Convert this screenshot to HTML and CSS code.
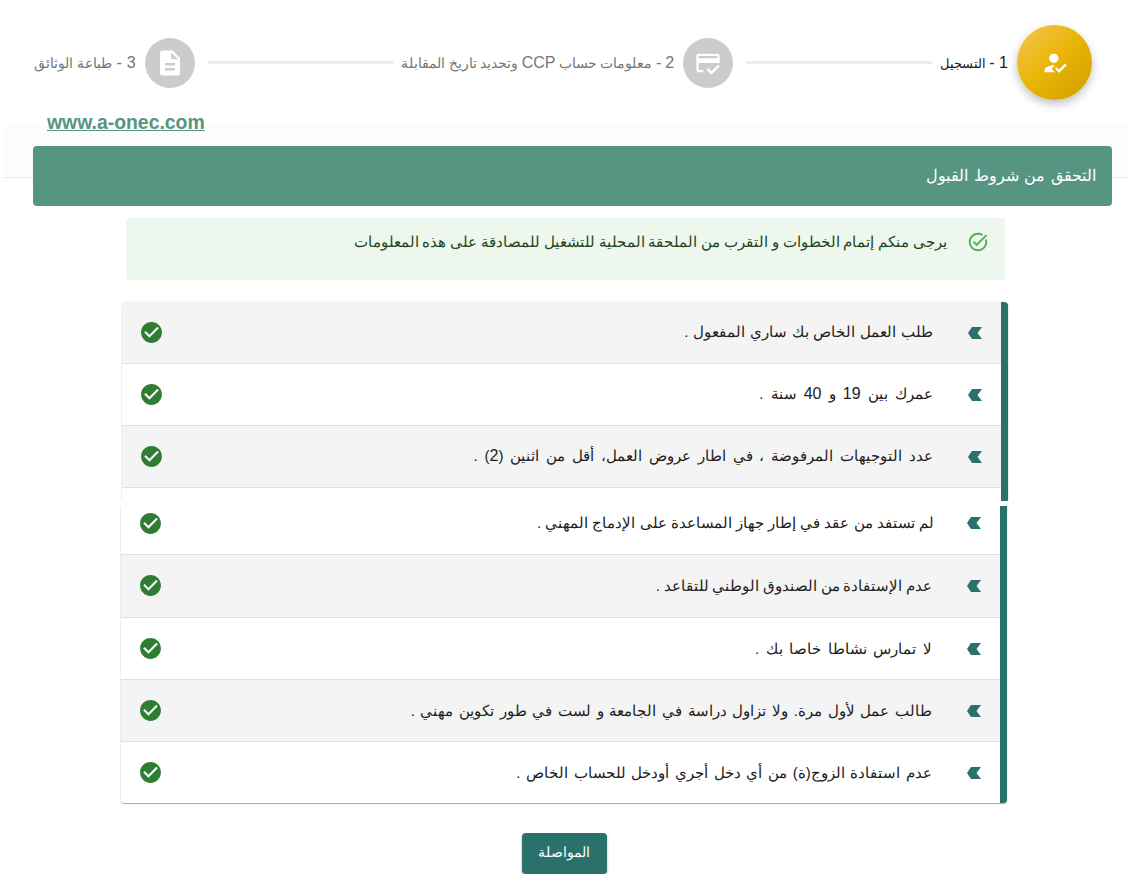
FILE: index.html
```html
<!DOCTYPE html>
<html lang="ar">
<head>
<meta charset="utf-8">
<title>التحقق من شروط القبول</title>
<link rel="stylesheet" href="styles.css">
</head>
<body>
<nav class="stepper" dir="rtl">
  <div class="step step-active">
    <span class="bubble bubble-active"><svg class="ico-28" viewBox="0 0 24 24"><path d="M9 17l3-2.94c-.39-.04-.68-.06-1-.06-2.67 0-8 1.34-8 4v2h9l-3-3zm2-5c2.21 0 4-1.79 4-4s-1.79-4-4-4-4 1.79-4 4 1.79 4 4 4m4.47 8.5L12 17l1.4-1.41 2.07 2.08 5.13-5.17 1.4 1.41z"/></svg></span>
    <span class="step-label"><span class="lat">1 -</span> التسجيل</span>
  </div>
  <span class="line"></span>
  <div class="step step-mid">
    <span class="bubble"><svg class="ico-28" viewBox="0 0 24 24"><path d="M20 4H4c-1.11 0-2 .89-2 2v12c0 1.11.89 2 2 2h4v-2H4v-6h18V6c0-1.11-.89-2-2-2zm0 4H4V6h16v2zm-5.07 11.17-2.83-2.83-1.41 1.41L14.93 22 22 14.93l-1.41-1.41-5.66 5.65z"/></svg></span>
    <span class="step-label"><span class="lat">2 -</span> معلومات حساب <span class="lat">CCP</span> وتحديد تاريخ المقابلة</span>
  </div>
  <span class="line"></span>
  <div class="step step-last">
    <span class="bubble"><svg class="ico-30" viewBox="0 0 24 24"><path d="M14 2H6c-1.1 0-1.99.9-1.99 2L4 20c0 1.1.89 2 1.99 2H18c1.1 0 2-.9 2-2V8l-6-6zm2 16H8v-2h8v2zm0-4H8v-2h8v2zm-3-5V3.5L18.5 9H13z"/></svg></span>
    <span class="step-label"><span class="lat">3 -</span> طباعة الوثائق</span>
  </div>
</nav>

<div class="band-wrap">
  <div class="band"></div>
  <a class="site-link" href="#">www.a-onec.com</a>
  <header class="title-bar" dir="rtl">التحقق من شروط القبول</header>
</div>

<div class="alert" dir="rtl">
  <svg class="alert-ico" viewBox="0 0 24 24"><path d="M22 5.18 10.59 16.6l-4.24-4.25 1.41-1.41 2.83 2.83 10-10L22 5.18zm-2.21 5.04c.13.57.21 1.17.21 1.78 0 4.42-3.58 8-8 8s-8-3.58-8-8 3.58-8 8-8c1.58 0 3.04.46 4.28 1.22l1.44-1.44C16.1 2.67 14.13 2 12 2 6.48 2 2 6.48 2 12s4.48 10 10 10 10-4.48 10-10c0-1.19-.22-2.33-.6-3.39l-1.61 1.61z"/></svg>
  <p class="alert-text">يرجى منكم إتمام الخطوات و التقرب من الملحقة المحلية للتشغيل للمصادقة على هذه المعلومات</p>
</div>

<section class="card card-one" dir="rtl">
  <div class="row row-grey">
    <svg class="chev" viewBox="0 0 14 12"><polygon points="0,6 4,0 14,0 9.5,6 14,12 4,12"/></svg>
    <span class="row-text ws-1">طلب العمل الخاص بك ساري المفعول .</span>
    <svg class="ok" viewBox="0 0 24 24"><path d="M12 2C6.48 2 2 6.48 2 12s4.48 10 10 10 10-4.48 10-10S17.52 2 12 2zm-2 15l-5-5 1.41-1.41L10 14.17l7.59-7.59L19 8l-9 9z"/></svg>
  </div>
  <div class="row">
    <svg class="chev" viewBox="0 0 14 12"><polygon points="0,6 4,0 14,0 9.5,6 14,12 4,12"/></svg>
    <span class="row-text ws-4">عمرك بين <span class="lat">19</span> و <span class="lat">40</span> سنة .</span>
    <svg class="ok" viewBox="0 0 24 24"><path d="M12 2C6.48 2 2 6.48 2 12s4.48 10 10 10 10-4.48 10-10S17.52 2 12 2zm-2 15l-5-5 1.41-1.41L10 14.17l7.59-7.59L19 8l-9 9z"/></svg>
  </div>
  <div class="row row-grey">
    <svg class="chev" viewBox="0 0 14 12"><polygon points="0,6 4,0 14,0 9.5,6 14,12 4,12"/></svg>
    <span class="row-text ws-3">عدد التوجيهات المرفوضة ، في اطار عروض العمل، أقل من اثنين (<span class="lat">2</span>) .</span>
    <svg class="ok" viewBox="0 0 24 24"><path d="M12 2C6.48 2 2 6.48 2 12s4.48 10 10 10 10-4.48 10-10S17.52 2 12 2zm-2 15l-5-5 1.41-1.41L10 14.17l7.59-7.59L19 8l-9 9z"/></svg>
  </div>
</section>

<section class="card card-two" dir="rtl">
  <div class="row row-first">
    <svg class="chev" viewBox="0 0 14 12"><polygon points="0,6 4,0 14,0 9.5,6 14,12 4,12"/></svg>
    <span class="row-text">لم تستفد من عقد في إطار جهاز المساعدة على الإدماج المهني .</span>
    <svg class="ok" viewBox="0 0 24 24"><path d="M12 2C6.48 2 2 6.48 2 12s4.48 10 10 10 10-4.48 10-10S17.52 2 12 2zm-2 15l-5-5 1.41-1.41L10 14.17l7.59-7.59L19 8l-9 9z"/></svg>
  </div>
  <div class="row row-grey">
    <svg class="chev" viewBox="0 0 14 12"><polygon points="0,6 4,0 14,0 9.5,6 14,12 4,12"/></svg>
    <span class="row-text ws-neg">عدم الإستفادة من الصندوق الوطني للتقاعد .</span>
    <svg class="ok" viewBox="0 0 24 24"><path d="M12 2C6.48 2 2 6.48 2 12s4.48 10 10 10 10-4.48 10-10S17.52 2 12 2zm-2 15l-5-5 1.41-1.41L10 14.17l7.59-7.59L19 8l-9 9z"/></svg>
  </div>
  <div class="row">
    <svg class="chev" viewBox="0 0 14 12"><polygon points="0,6 4,0 14,0 9.5,6 14,12 4,12"/></svg>
    <span class="row-text ws-2">لا تمارس نشاطا خاصا بك .</span>
    <svg class="ok" viewBox="0 0 24 24"><path d="M12 2C6.48 2 2 6.48 2 12s4.48 10 10 10 10-4.48 10-10S17.52 2 12 2zm-2 15l-5-5 1.41-1.41L10 14.17l7.59-7.59L19 8l-9 9z"/></svg>
  </div>
  <div class="row row-grey">
    <svg class="chev" viewBox="0 0 14 12"><polygon points="0,6 4,0 14,0 9.5,6 14,12 4,12"/></svg>
    <span class="row-text ws-15">طالب عمل لأول مرة. ولا تزاول دراسة في الجامعة و لست في طور تكوين مهني .</span>
    <svg class="ok" viewBox="0 0 24 24"><path d="M12 2C6.48 2 2 6.48 2 12s4.48 10 10 10 10-4.48 10-10S17.52 2 12 2zm-2 15l-5-5 1.41-1.41L10 14.17l7.59-7.59L19 8l-9 9z"/></svg>
  </div>
  <div class="row row-last">
    <svg class="chev" viewBox="0 0 14 12"><polygon points="0,6 4,0 14,0 9.5,6 14,12 4,12"/></svg>
    <span class="row-text ws-15">عدم استفادة الزوج(ة) من أي دخل أجري أودخل للحساب الخاص .</span>
    <svg class="ok" viewBox="0 0 24 24"><path d="M12 2C6.48 2 2 6.48 2 12s4.48 10 10 10 10-4.48 10-10S17.52 2 12 2zm-2 15l-5-5 1.41-1.41L10 14.17l7.59-7.59L19 8l-9 9z"/></svg>
  </div>
</section>

<div class="actions">
  <button class="next" type="button">المواصلة</button>
</div>
</body>
</html>
```

FILE: styles.css
```css
* { box-sizing: border-box; }
html, body { margin: 0; padding: 0; }
body {
  background: #fff;
  color: #212121;
  font-family: "Liberation Sans", Arial, sans-serif;
  font-size: 16px;
  overflow: hidden;
}
.lat { font-size: 16px; }

/* stepper */
.stepper {
  display: flex;
  align-items: center;
  height: 75px;
  margin-top: 25px;
  padding: 0 36px 0 34px;
}
.step { display: flex; align-items: center; gap: 9px; flex: none; }
.bubble {
  width: 50px;
  height: 50px;
  border-radius: 50%;
  background: #ccc;
  color: #fff;
  display: flex;
  align-items: center;
  justify-content: center;
}
.bubble-active {
  width: 75px;
  height: 75px;
  background: linear-gradient(136deg, #f2c94c 0%, #e9b306 50%, #d09e00 100%);
  box-shadow: 0 4px 10px rgba(0, 0, 0, .25);
}
.ico-28 { width: 28px; height: 28px; fill: currentColor; }
.ico-30 { width: 30px; height: 30px; fill: currentColor; }
.step-label { font-size: 14px; color: #757575; white-space: nowrap; }
.step-active .step-label { color: #212121; font-size: 13px; }
.step-mid .step-label { word-spacing: -.4px; }
.step-last .step-label { word-spacing: .4px; }
.line {
  flex: 1;
  height: 3px;
  margin: 0 8px 0 13px;
  background: #eaeaf0;
}

/* title band */
.band-wrap {
  position: relative;
  padding: 12px 16px 0 33px;
}
.band {
  position: absolute;
  left: 3px;
  right: 0;
  top: 25px;
  height: 52px;
  background: #fefcfa;
  box-shadow: 0 1px 1px rgba(0, 0, 0, .08);
}
.site-link {
  position: relative;
  display: block;
  height: 34px;
  padding-left: 14px;
  font-size: 19.4px;
  line-height: 20px;
  font-weight: 700;
  color: #559582;
  text-decoration: underline;
}
.title-bar {
  position: relative;
  height: 60px;
  padding: 0 16px 2px;
  display: flex;
  align-items: center;
  border-radius: 4px;
  background: #559582;
  color: #fff;
  font-size: 16.4px;
  word-spacing: 1px;
}

/* alert */
.alert {
  display: flex;
  align-items: flex-start;
  gap: 20px;
  width: 879px;
  height: 62px;
  margin: 12px 0 0 126px;
  padding: 14px 16px 0;
  border-radius: 4px;
  background: #edf7ed;
  color: #1e4620;
}
.alert-ico { width: 22px; height: 22px; flex: none; fill: #4caf50; margin-top: -1px; }
.alert-text { margin: -1px 0 0; font-size: 14.75px; line-height: 22px; word-spacing: -.3px; }

/* lists */
.card {
  width: 886px;
  background: #fff;
  border-right: 7px solid #2a716b;
  box-shadow: 0 1px 1px rgba(0, 0, 0, .32), 0 0 2px rgba(0, 0, 0, .12);
}
.card-one {
  height: 199px;
  margin: 22px 0 0 122px;
  border-radius: 4px 4px 0 0;
  clip-path: inset(-4px -4px 0 -4px);
}
.card-two {
  height: 297px;
  margin: 5px 0 0 121px;
  border-radius: 0 0 4px 4px;
  clip-path: inset(0 -4px -4px -4px);
}
.row {
  display: flex;
  align-items: center;
  height: 62px;
  padding: 0 19px 0 17px;
  border-bottom: 1px solid #e0e0e0;
  background: #fff;
}
.row-grey { background: #f4f4f4; }
.row-first { height: 49px; padding-bottom: 14px; }
.row-first + .row { height: 63px; padding-bottom: 1px; }
.row-last { height: 61px; border-bottom: 0; border-radius: 0 0 0 4px; }
.chev { width: 14px; height: 12px; flex: none; fill: #2a716b; }
.row-text { flex: 1; margin-right: 35px; font-size: 15px; color: #212121; }
.card-one .row-text { margin-bottom: 2px; }
.row-first .row-text { margin-right: 33px; }
.ws-neg { word-spacing: -.5px; }
.ws-1 { word-spacing: .6px; }
.ws-15 { word-spacing: 1.5px; }
.ws-2 { word-spacing: 2.4px; }
.ws-3 { word-spacing: 2.7px; }
.ws-4 { word-spacing: 3px; }
.ok { width: 25px; height: 25px; flex: none; fill: #2e7d32; }

/* action */
.actions { margin-top: 30px; padding-left: 522px; }
.next {
  width: 85px;
  height: 41px;
  padding: 0 1px 3px 0;
  border: 0;
  border-radius: 4px;
  background: #2a716b;
  color: #fff;
  font-family: inherit;
  font-size: 14.3px;
  box-shadow: 0 2px 3px rgba(0, 0, 0, .3);
}
```
